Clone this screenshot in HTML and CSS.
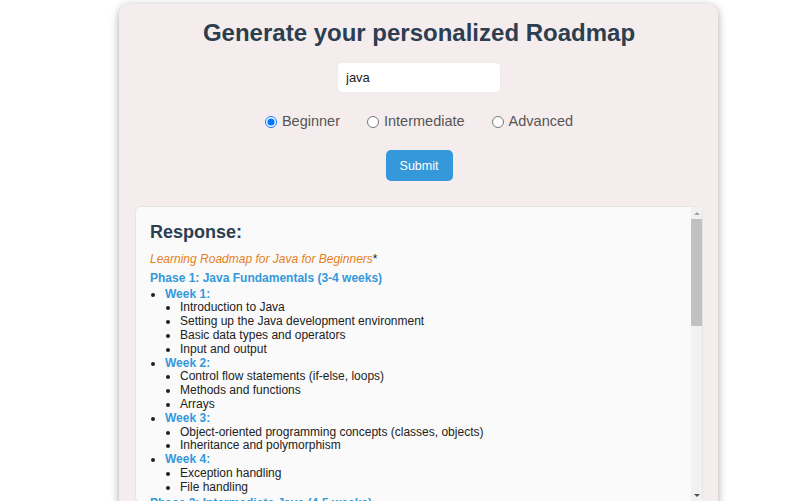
FILE: index.html
```html
<!DOCTYPE html>
<html lang="en">
<head>
<meta charset="utf-8">
<title>Roadmap Generator</title>
<link rel="stylesheet" href="styles.css">
</head>
<body>
<div class="page">
  <div class="card">
    <h1 class="title">Generate your personalized Roadmap</h1>
    <input class="topic" type="text" value="java">
    <div class="levels">
      <label class="level"><input type="radio" name="level" checked>Beginner</label>
      <label class="level"><input type="radio" name="level">Intermediate</label>
      <label class="level"><input type="radio" name="level">Advanced</label>
    </div>
    <button class="submit">Submit</button>
    <div class="response-wrap">
      <div class="response">
        <h2 class="resp-title">Response:</h2>
        <p class="intro"><em>Learning Roadmap for Java for Beginners</em>*</p>
        <h3 class="phase">Phase 1: Java Fundamentals (3-4 weeks)</h3>
        <ul class="weeks">
          <li><strong>Week 1:</strong>
            <ul>
              <li>Introduction to Java</li>
              <li>Setting up the Java development environment</li>
              <li>Basic data types and operators</li>
              <li>Input and output</li>
            </ul>
          </li>
          <li><strong>Week 2:</strong>
            <ul>
              <li>Control flow statements (if-else, loops)</li>
              <li>Methods and functions</li>
              <li>Arrays</li>
            </ul>
          </li>
          <li><strong>Week 3:</strong>
            <ul>
              <li>Object-oriented programming concepts (classes, objects)</li>
              <li>Inheritance and polymorphism</li>
            </ul>
          </li>
          <li><strong>Week 4:</strong>
            <ul>
              <li>Exception handling</li>
              <li>File handling</li>
            </ul>
          </li>
        </ul>
        <h3 class="phase">Phase 2: Intermediate Java (4-5 weeks)</h3>
        <ul class="weeks">
          <li><strong>Week 5:</strong>
            <ul>
              <li>Collections framework (lists, sets, maps)</li>
              <li>Generics</li>
            </ul>
          </li>
          <li><strong>Week 6:</strong>
            <ul>
              <li>Multithreading and concurrency</li>
              <li>Lambda expressions and streams</li>
            </ul>
          </li>
        </ul>
      </div>
      <div class="scrollbar" aria-hidden="true">
        <div class="sb-btn"><span class="arrow-up"></span></div>
        <div class="sb-track"><div class="sb-thumb"></div></div>
        <div class="sb-btn"><span class="arrow-down"></span></div>
      </div>
    </div>
  </div>
</div>
</body>
</html>
```
FILE: styles.css
```css
html, body {
  margin: 0;
  padding: 0;
  background: #ffffff;
  overflow: hidden;
  height: 100%;
}

body {
  font-family: "Liberation Sans", Arial, sans-serif;
}

.page {
  padding: 4px 0 0 119px;
}

.card {
  width: 599px;
  box-sizing: border-box;
  background: #f5eded;
  border-radius: 10px;
  box-shadow: 0 2px 8px rgba(0, 0, 0, 0.35);
  padding: 15px 15px 20px 16px;
  display: flex;
  flex-direction: column;
  align-items: center;
}

.title {
  margin: 0 0 15px;
  font-size: 24px;
  line-height: 28px;
  font-weight: bold;
  color: #2c3e50;
}

.topic {
  width: 164px;
  height: 31px;
  box-sizing: border-box;
  border: 1px solid #f0eaea;
  border-radius: 5px;
  background: #ffffff;
  padding: 0 8px;
  font-family: "Liberation Sans", Arial, sans-serif;
  font-size: 13px;
  color: #222;
  outline: none;
}

.levels {
  margin-top: 20px;
  display: flex;
  gap: 27px;
  font-size: 14.5px;
  line-height: 17px;
  color: #555;
}

.level {
  display: flex;
  align-items: center;
}

.level input {
  margin: 0 5px 0 0;
  width: 12px;
  height: 12px;
}

.submit {
  margin-top: 20px;
  width: 67px;
  height: 31px;
  border: none;
  border-radius: 5px;
  background: #3498db;
  color: #ffffff;
  font-family: "Liberation Sans", Arial, sans-serif;
  font-size: 12.5px;
  padding: 0;
}

.response-wrap {
  position: relative;
  margin-top: 25px;
  align-self: stretch;
  height: 296px;
}

.response {
  height: 100%;
  box-sizing: border-box;
  overflow: hidden;
  background: #fafafa;
  border: 1px solid #e8e4e4;
  border-radius: 5px;
  padding: 15px 26px 14px 14px;
  color: #222;
  font-size: 12px;
  line-height: 13.8px;
}

.scrollbar {
  position: absolute;
  top: 1px;
  right: 1px;
  bottom: 1px;
  width: 11px;
  background: #f1f1f1;
  display: flex;
  flex-direction: column;
}

.sb-btn {
  height: 12px;
  flex: none;
  display: flex;
  align-items: center;
  justify-content: center;
}

.sb-track {
  flex: 1;
}

.sb-thumb {
  height: 107px;
  background: #c1c1c1;
}

.arrow-up {
  width: 0;
  height: 0;
  border-left: 3px solid transparent;
  border-right: 3px solid transparent;
  border-bottom: 3px solid #a3a3a3;
}

.arrow-down {
  width: 0;
  height: 0;
  border-left: 3px solid transparent;
  border-right: 3px solid transparent;
  border-top: 3px solid #505050;
}

.resp-title {
  margin: 0 0 10px;
  font-size: 18px;
  line-height: 21px;
  color: #2c3e50;
}

.intro {
  margin: 0 0 5px;
}

.intro em {
  color: #e67e22;
}

.phase {
  margin: 2px 0;
  font-size: 12px;
  line-height: 13.8px;
  font-weight: bold;
  color: #3498db;
}

.weeks,
.weeks ul {
  margin: 0;
  padding-left: 15px;
  list-style: disc;
}

.weeks strong {
  color: #3498db;
}
```
